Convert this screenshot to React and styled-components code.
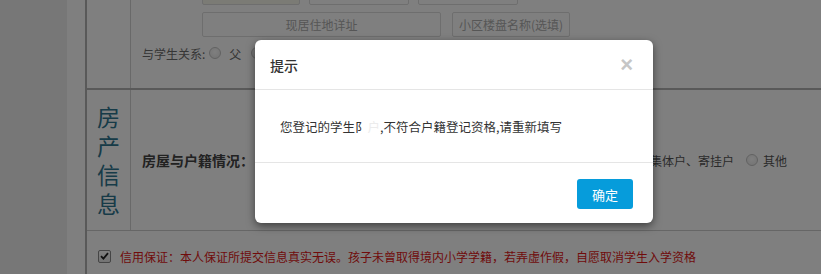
import React from 'react';
import styled, { createGlobalStyle } from 'styled-components';

const GlobalStyle = createGlobalStyle`
  html, body {
    margin: 0;
    padding: 0;
  }
  body {
    font-family: "Noto Sans CJK SC", "Liberation Sans", sans-serif;
    color: #333;
  }
`;

const Screen = styled.div`
  position: relative;
  width: 821px;
  height: 274px;
  overflow: hidden;
  background: #eee;
  display: flex;
`;

const Gutter = styled.div`
  width: 67px;
  flex-shrink: 0;
`;

const Sheet = styled.div`
  flex: 1;
  background: #fff;
  padding-left: 18px;
`;

const Table = styled.div`
  margin-top: -30px;
  border-left: 2px solid #b2b2b2;
`;

const Row = styled.div`
  display: flex;
  border-bottom: ${p => p.line || 'none'};
  min-height: ${p => p.h || 0}px;
`;

const SideCell = styled.div`
  width: 43px;
  flex-shrink: 0;
  border-right: 1px solid #d2d2d2;
  display: flex;
  align-items: center;
  justify-content: center;
`;

const SideTitle = styled.div`
  width: 1em;
  font-size: 23px;
  line-height: 29px;
  color: #2f7690;
  text-align: center;
`;

const MainCell = styled.div`
  flex: 1;
  padding: ${p => p.pad || '0 0 0 11px'};
  display: flex;
  flex-direction: ${p => p.dir || 'row'};
  align-items: ${p => p.align || 'stretch'};
`;

const InputRow = styled.div`
  display: flex;
  gap: ${p => p.gap}px;
  margin: ${p => p.m || '0'};
  padding-left: 60px;
`;

const Field = styled.div`
  box-sizing: border-box;
  width: ${p => p.w}px;
  height: 25px;
  border: 1px solid #dcdcdc;
  border-radius: 2px;
  background: ${p => p.bg || '#fff'};
  color: #adadad;
  font-size: 12px;
  display: flex;
  align-items: center;
  justify-content: center;
`;

const Line = styled.div`
  display: flex;
  align-items: center;
  height: 20px;
  margin: ${p => p.m || '0'};
  font-size: 12px;
  color: #6c6c6c;
`;

const Radio = styled.span`
  box-sizing: border-box;
  display: inline-block;
  width: 12px;
  height: 12px;
  border-radius: 50%;
  border: 1px solid #c4c4c4;
  background: radial-gradient(circle at 50% 40%, #fff 0%, #e6e6e6 100%);
  margin: ${p => p.m || '0 5px 0 0'};
  flex-shrink: 0;
`;

const Label = styled.div`
  font-size: 14px;
  font-weight: bold;
  color: #444;
`;

const Options = styled.div`
  margin-left: auto;
  padding-right: 34px;
  display: flex;
  align-items: center;
  gap: 12px;
  font-size: 12px;
  color: #555;
`;

const Option = styled.div`
  display: flex;
  align-items: center;
  white-space: nowrap;
`;

const Pledge = styled.div`
  display: flex;
  align-items: center;
  padding: 0 0 0 11px;
  font-size: 12px;
  color: #e01616;
  height: 50px;
  align-self: flex-start;
  box-sizing: border-box;
`;

const Check = styled.span`
  box-sizing: border-box;
  width: 13px;
  height: 13px;
  border: 1px solid #8a8a8a;
  border-radius: 2px;
  background: linear-gradient(#fff, #e8e8e8);
  margin-right: 9px;
  display: flex;
  align-items: center;
  justify-content: center;
`;

const Backdrop = styled.div`
  position: absolute;
  inset: 0;
  background: rgba(0, 0, 0, 0.5);
`;

const Modal = styled.div`
  position: absolute;
  left: 255px;
  top: 40px;
  width: 398px;
  height: 183px;
  background: #fff;
  border-radius: 6px;
  box-shadow: 0 3px 9px rgba(0, 0, 0, 0.5);
  display: flex;
  flex-direction: column;
  overflow: hidden;
`;

const ModalHead = styled.div`
  height: 50px;
  box-sizing: border-box;
  border-bottom: 1px solid #e5e5e5;
  padding: 0 20px 0 15px;
  display: flex;
  align-items: center;
  justify-content: space-between;
`;

const Title = styled.div`
  font-size: 14px;
  color: #333;
  font-weight: 500;
`;

const Close = styled.span`
  font-family: "Liberation Sans", sans-serif;
  font-size: 22px;
  font-weight: bold;
  color: #c6c6c6;
  line-height: 1;
  margin-top: 1px;
`;

const ModalBody = styled.div`
  height: 73px;
  box-sizing: border-box;
  border-bottom: 1px solid #e5e5e5;
  padding: 1px 25px 0;
  display: flex;
  align-items: center;
  font-size: 12.5px;
  color: #333;
  white-space: pre;
`;

const Faded = styled.span`
  color: #ececec;
`;

const ModalFoot = styled.div`
  flex: 1;
  display: flex;
  justify-content: flex-end;
  align-items: flex-start;
  padding: 16px 20px 0 0;
`;

const Button = styled.button`
  width: 56px;
  height: 30px;
  border: none;
  border-radius: 3px;
  background: #069cdb;
  color: #fff;
  font-family: inherit;
  font-size: 13px;
  padding: 0;
`;

export default function App() {
  return (
    <>
      <GlobalStyle />
      <Screen>
        <Gutter />
        <Sheet>
          <Table>
            <Row line="2px solid #b2b2b2" h={118}>
              <SideCell />
              <MainCell dir="column" pad="10px 0 0 11px">
                <InputRow gap={9}>
                  <Field w={98} bg="#f6f6ea" />
                  <Field w={100} />
                  <Field w={100} />
                </InputRow>
                <InputRow gap={11} m="7px 0 0 0">
                  <Field w={239}>现居住地详址</Field>
                  <Field w={118}>小区楼盘名称(选填)</Field>
                </InputRow>
                <Line m="6px 0 0 0">
                  与学生关系:<Radio m="0 8px 0 4px" />父<Radio m="0 0 0 10px" />
                </Line>
              </MainCell>
            </Row>
            <Row line="1px solid #cdcdcd" h={140}>
              <SideCell>
                <SideTitle>房产信息</SideTitle>
              </SideCell>
              <MainCell align="center">
                <Label>房屋与户籍情况：</Label>
                <Options>
                  <Option><Radio />本区户籍、有房产</Option>
                  <Option><Radio />本区户籍、无房产</Option>
                  <Option><Radio />集体户、寄挂户</Option>
                  <Option><Radio />其他</Option>
                </Options>
              </MainCell>
            </Row>
            <Row>
              <Pledge>
                <Check>
                  <svg width="9" height="8" viewBox="0 0 9 8">
                    <path d="M1 4.2 L3.4 6.6 L8 1.2" fill="none" stroke="#222" strokeWidth="1.8" />
                  </svg>
                </Check>
                信用保证：本人保证所提交信息真实无误。孩子未曾取得境内小学学籍，若弄虚作假，自愿取消学生入学资格
              </Pledge>
            </Row>
          </Table>
        </Sheet>
        <Backdrop />
        <Modal>
          <ModalHead>
            <Title>提示</Title>
            <Close>×</Close>
          </ModalHead>
          <ModalBody>
            您登记的学生阝<Faded>户</Faded>,不符合户籍登记资格,请重新填写
          </ModalBody>
          <ModalFoot>
            <Button>确定</Button>
          </ModalFoot>
        </Modal>
      </Screen>
    </>
  );
}
